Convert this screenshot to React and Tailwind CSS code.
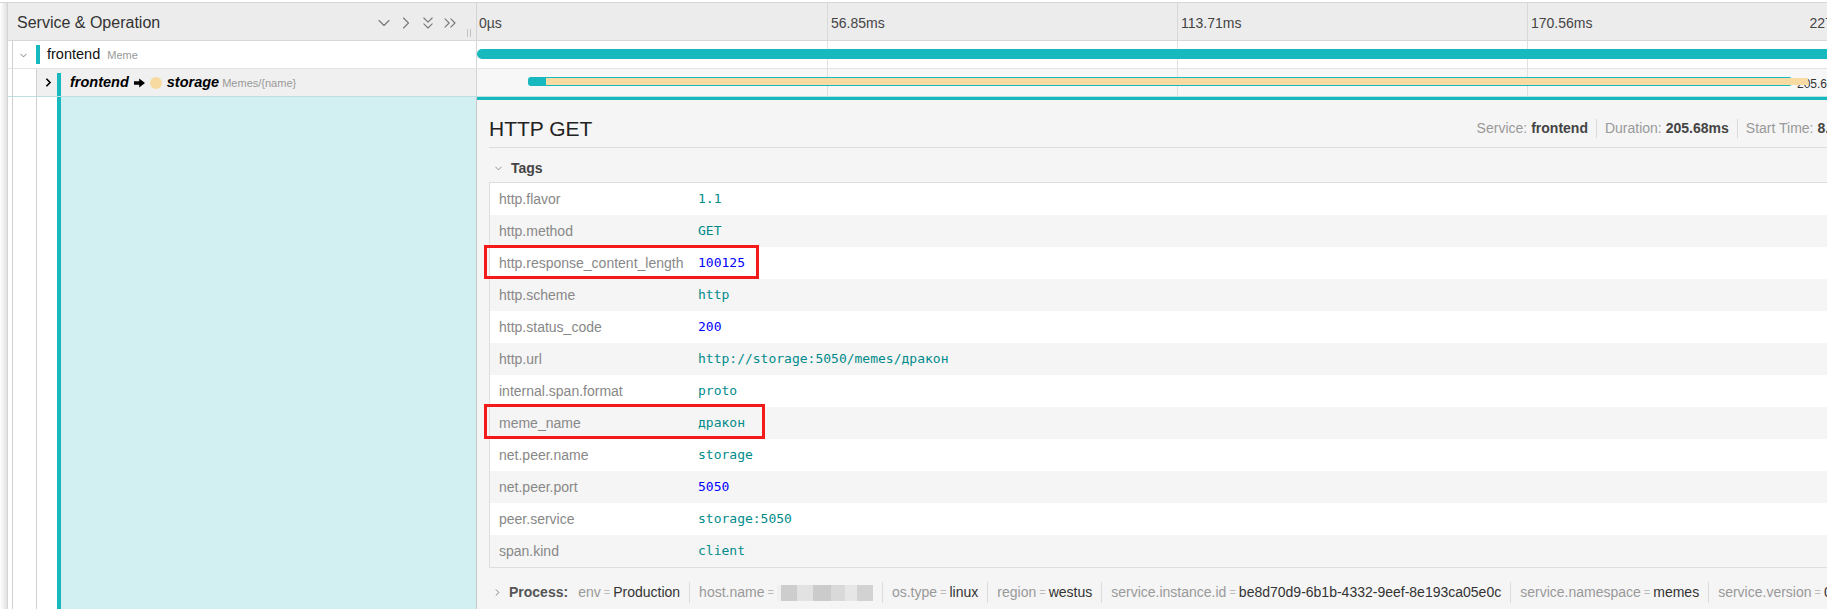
import React from 'react';
import { ChevronDown, ChevronRight, ChevronsDown, ChevronsRight } from 'lucide-react';

const tags = [
  { key: 'http.flavor', value: '1.1', num: false },
  { key: 'http.method', value: 'GET', num: false },
  { key: 'http.response_content_length', value: '100125', num: true },
  { key: 'http.scheme', value: 'http', num: false },
  { key: 'http.status_code', value: '200', num: true },
  { key: 'http.url', value: 'http://storage:5050/memes/дракон', num: false },
  { key: 'internal.span.format', value: 'proto', num: false },
  { key: 'meme_name', value: 'дракон', num: false },
  { key: 'net.peer.name', value: 'storage', num: false },
  { key: 'net.peer.port', value: '5050', num: true },
  { key: 'peer.service', value: 'storage:5050', num: false },
  { key: 'span.kind', value: 'client', num: false },
];

const processTags = [
  ['env', 'Production'],
  ['host.name', null],
  ['os.type', 'linux'],
  ['region', 'westus'],
  ['service.instance.id', 'be8d70d9-6b1b-4332-9eef-8e193ca05e0c'],
  ['service.namespace', 'memes'],
  ['service.version', '0.1.0'],
];

// blurred host name
const blur = [
  ['w-[4px]', 'bg-[#f0f0f0]'],
  ['w-[16px]', 'bg-[#cdcdcd]'],
  ['w-[16px]', 'bg-[#e2e2e2]'],
  ['w-[18px]', 'bg-[#cbcbcb]'],
  ['w-[14px]', 'bg-[#d9d9d9]'],
  ['w-[12px]', 'bg-[#e6e6e6]'],
  ['w-[16px]', 'bg-[#d2d2d2]'],
];

function TickLines() {
  return (
    <div className="absolute inset-0 grid grid-cols-4">
      <div />
      <div className="border-l border-[#e0e0e0]" />
      <div className="border-l border-[#e0e0e0]" />
      <div className="border-l border-[#e0e0e0]" />
    </div>
  );
}

function Arrow() {
  return (
    <svg width="11" height="10" viewBox="0 0 11 10" className="mx-[5px]">
      <path d="M0 3.2h5.2V0.4L11 5 5.2 9.6V6.8H0z" fill="#000" />
    </svg>
  );
}

export default function App() {
  return (
    <div className="w-[1827px] h-[609px] overflow-hidden bg-white pt-[2px] font-['Liberation_Sans',Arial,sans-serif] text-[#333]">
      <div className="flex h-full border-t border-[#d6d6d6]">
        <div className="w-[8px] shrink-0 bg-gradient-to-r from-white to-[#e2e2e2] border-r border-[#d4d4d4]" />

        <div className="flex flex-col w-[1869px] shrink-0">
          {/* header */}
          <div className="flex h-[38px] bg-[#ececec] border-b border-[#d8d8d8]">
            <div className="w-[469px] shrink-0 flex items-center pt-[3px] pl-[9px] border-r border-[#d4d4d4] relative">
              <span className="text-[16px] text-[#333]">Service &amp; Operation</span>
              <div className="ml-auto flex items-center gap-[2px] mr-[16px] text-[#777]">
                <ChevronDown size={20} strokeWidth={1.3} />
                <ChevronRight size={20} strokeWidth={1.3} />
                <ChevronsDown size={20} strokeWidth={1.3} />
                <ChevronsRight size={20} strokeWidth={1.3} />
              </div>
              <div className="absolute right-[5px] top-[26px] flex gap-[2px]">
                <div className="w-px h-[8px] bg-[#c4c4c4]" />
                <div className="w-px h-[8px] bg-[#c4c4c4]" />
              </div>
            </div>
            <div className="w-[1400px] shrink-0 grid grid-cols-4 text-[14px] text-[#444]">
              <div className="flex items-center pt-[3px] pl-[2px]">0µs</div>
              <div className="flex items-center pt-[3px] pl-[3px] border-l border-[#d8d8d8]">56.85ms</div>
              <div className="flex items-center pt-[3px] pl-[3px] border-l border-[#d8d8d8]">113.71ms</div>
              <div className="flex items-center justify-between pt-[3px] pl-[3px] pr-[6px] border-l border-[#d8d8d8]">
                <span>170.56ms</span>
                <span>227.41ms</span>
              </div>
            </div>
          </div>

          {/* row 1 */}
          <div className="flex h-[28px] border-b border-[#e4e4e4]">
            <div className="w-[469px] shrink-0 flex items-stretch border-r border-[#d4d4d4]">
              <div className="w-[4px] shrink-0" />
              <div className="border-l border-[#d0d0d0] w-[24px] shrink-0 flex items-center pl-[5px] pt-[2px] text-[#555]">
                <ChevronDown size={11} strokeWidth={1.6} />
              </div>
              <div className="flex items-center">
                <div className="w-[4px] h-[19px] bg-[#17b8be] mr-[7px]" />
                <span className="text-[14.5px] text-[#111]">frontend</span>
                <span className="text-[11px] text-[#999] ml-[7px] mt-[2px]">Meme</span>
              </div>
            </div>
            <div className="w-[1400px] shrink-0 relative bg-white">
              <TickLines />
              <div className="absolute left-0 right-0 top-[8px] h-[10px] bg-[#17b8be] rounded-l-[5px]" />
            </div>
          </div>

          {/* row 2 */}
          <div className="flex h-[28px] border-b border-[#bcdfe1]">
            <div className="w-[469px] shrink-0 flex items-stretch border-r border-[#d4d4d4] bg-[#f0f0f0]">
              <div className="w-[4px] shrink-0 bg-white" />
              <div className="border-l border-[#d0d0d0] w-[24px] shrink-0 bg-white" />
              <div className="border-l border-[#d0d0d0] w-[21px] shrink-0 flex items-center pl-[5px] text-black">
                <ChevronRight size={13} strokeWidth={3.2} />
              </div>
              <div className="w-[4px] shrink-0 bg-[#17b8be] mt-[4px]" />
              <div className="flex items-center pl-[9px]">
                <span className="text-[14.5px] font-bold italic text-black">frontend</span>
                <Arrow />
                <span className="w-[12px] h-[12px] rounded-full bg-[#f7da9f] mr-[5px]" />
                <span className="text-[14.5px] font-bold italic text-black">storage</span>
                <span className="text-[11px] text-[#999] ml-[3px] mt-[2px]">Memes/{'{name}'}</span>
              </div>
            </div>
            <div className="w-[1400px] shrink-0 relative bg-[#f7f7f7]">
              <TickLines />
              <span className="absolute left-[1320px] top-[6px] text-[12px] text-[#333]">205.68ms</span>
              <div className="absolute left-[51px] w-[1264px] top-[8px] h-[9px] bg-[#17b8be] rounded-[3px]" />
              <div className="absolute left-[69px] w-[1262px] top-[9px] h-[7px] bg-[#f8dba2]" />
            </div>
          </div>

          {/* detail row */}
          <div className="flex flex-1">
            <div className="w-[469px] shrink-0 flex items-stretch border-r border-[#c8c8c8]">
              <div className="w-[4px] shrink-0" />
              <div className="border-l border-[#d0d0d0] w-[24px] shrink-0" />
              <div className="border-l border-[#d0d0d0] w-[21px] shrink-0" />
              <div className="w-[4px] shrink-0 bg-[#17b8be]" />
              <div className="flex-1 bg-[#d2f0f2]" />
            </div>
            <div className="w-[1400px] shrink-0 bg-[#f5f5f5] border-t-[3px] border-[#17b8be] px-[12px]">
              <div className="flex items-center h-[48px] pt-[10px] border-b border-[#dcdcdc]">
                <h2 className="text-[21px] text-[#222]">HTTP GET</h2>
                <div className="ml-auto flex items-center text-[14px]">
                  <span className="text-[#999]">Service:</span>
                  <span className="font-bold text-[#444] ml-[4px]">frontend</span>
                  <span className="w-px h-[19px] bg-[#dadada] mx-[8px]" />
                  <span className="text-[#999]">Duration:</span>
                  <span className="font-bold text-[#444] ml-[4px]">205.68ms</span>
                  <span className="w-px h-[19px] bg-[#dadada] mx-[8px]" />
                  <span className="text-[#999]">Start Time:</span>
                  <span className="font-bold text-[#444] ml-[4px]">8.52ms</span>
                </div>
              </div>

              <div className="flex items-center h-[34px] pt-[6px]">
                <ChevronDown size={11} strokeWidth={1.5} className="text-[#666] ml-[4px] mr-[7px]" />
                <span className="text-[14px] font-bold text-[#444]">Tags</span>
              </div>

              <div className="relative border border-[#dedede]">
                {tags.map((t, i) => (
                  <div key={t.key} className={`flex items-center h-[32px] ${i % 2 === 0 ? 'bg-white' : 'bg-[#f5f5f5]'}`}>
                    <div className="w-[199px] shrink-0 pl-[9px] text-[14px] text-[#888]">{t.key}</div>
                    <div className={`pl-[9px] text-[13px] font-['DejaVu_Sans_Mono',monospace] ${t.num ? 'text-[#0000ff]' : 'text-[#008b8b]'}`}>
                      {t.value}
                    </div>
                  </div>
                ))}
                <div className="absolute left-[-6px] top-[62px] w-[275px] h-[34px] border-[3px] border-[#f41a1a]" />
                <div className="absolute left-[-6px] top-[221px] w-[281px] h-[35px] border-[3px] border-[#f41a1a]" />
              </div>

              <div className="flex items-center mt-[14px] text-[14px] leading-[21px]">
                <ChevronRight size={11} strokeWidth={1.5} className="text-[#555] ml-[3px] mr-[6px]" />
                <span className="font-bold text-[#555] mr-[1px]">Process:</span>
                {processTags.map(([k, v], i) => (
                  <div
                    key={k}
                    className={`flex items-center px-[9px] ${i < processTags.length - 1 ? 'border-r border-[#dcdcdc]' : ''}`}
                  >
                    <span className="text-[#999]">{k}</span>
                    <span className="text-[11px] text-[#bbb] mx-[3px]">=</span>
                    {v ? (
                      <span className="text-[#333]">{v}</span>
                    ) : (
                      <span className="flex h-[16px]">
                        {blur.map(([w, c], j) => (
                          <span key={j} className={`${w} h-full ${c}`} />
                        ))}
                      </span>
                    )}
                  </div>
                ))}
              </div>
            </div>
          </div>
        </div>
      </div>
    </div>
  );
}
